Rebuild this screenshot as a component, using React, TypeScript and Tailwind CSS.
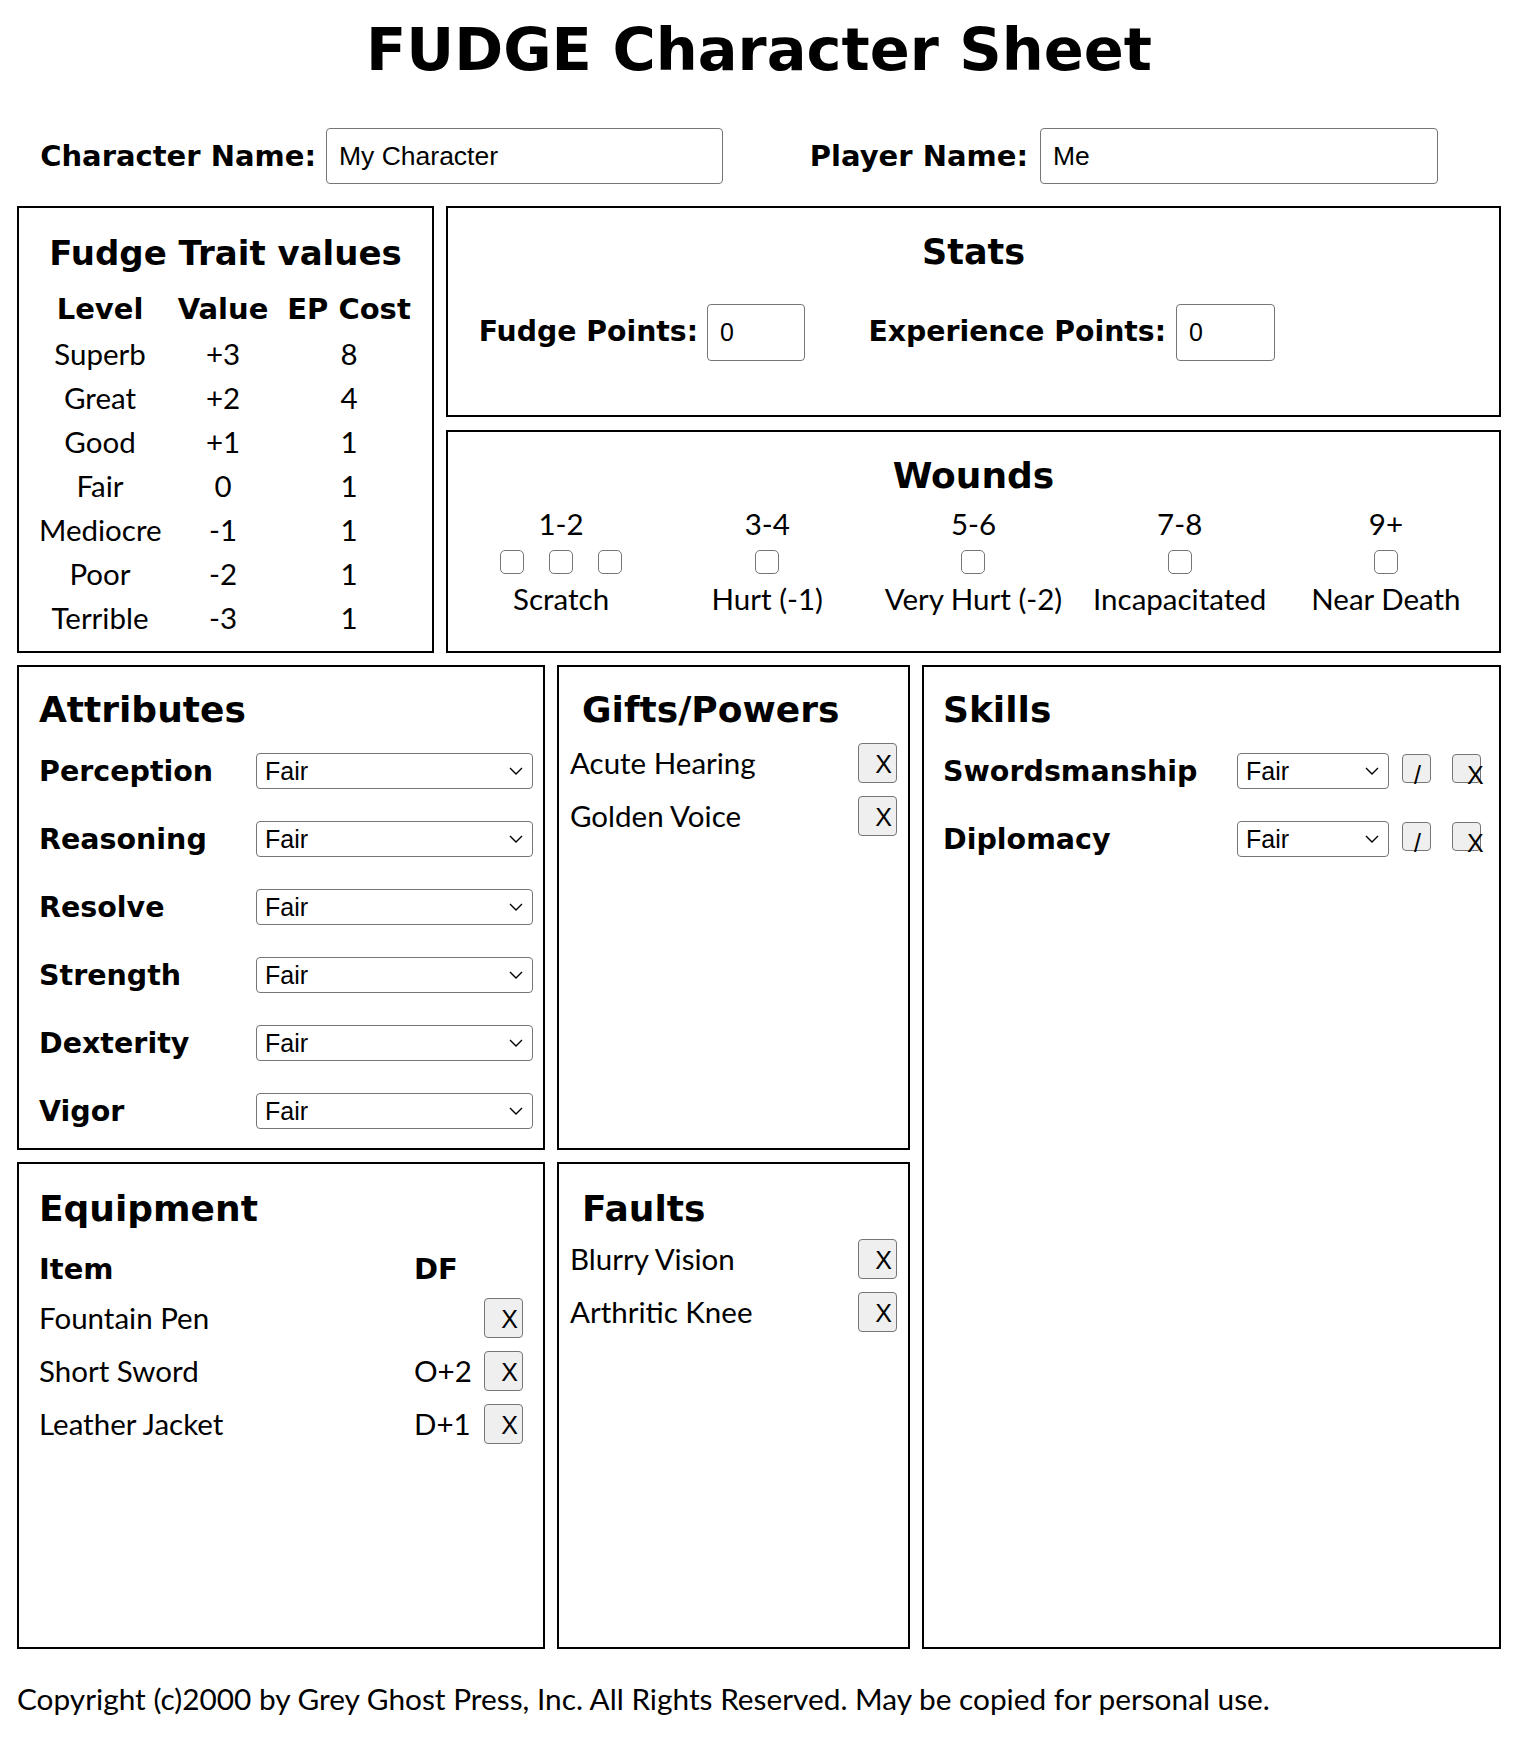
import React from "react";

const sans = "font-['Lato','Open_Sans',sans-serif]";
const bold = "font-['DejaVu_Sans','Open_Sans',sans-serif] font-bold";
const helv = "font-['Liberation_Sans',Arial,Helvetica,sans-serif]";

function Chevron() {
  return (
    <svg
      width="14"
      height="9"
      viewBox="0 0 14 9"
      className="pointer-events-none absolute right-[10px] top-1/2 -translate-y-1/2"
    >
      <path d="M1 1.5 L7 7.5 L13 1.5" fill="none" stroke="#000" strokeWidth="1.4" />
    </svg>
  );
}

function FairSelect({ cls }: { cls: string }) {
  return (
    <div className={`relative h-[36px] ${cls}`}>
      <select
        defaultValue="Fair"
        className={`${helv} appearance-none w-full h-full border border-[#767676] rounded-[4px] bg-white pl-[8px] text-[25px] leading-none text-black outline-none`}
      >
        <option>Superb</option>
        <option>Great</option>
        <option>Good</option>
        <option>Fair</option>
        <option>Mediocre</option>
        <option>Poor</option>
        <option>Terrible</option>
      </select>
      <Chevron />
    </div>
  );
}

function XBtn() {
  return (
    <button
      className={`${helv} w-[39px] h-[40px] shrink-0 border border-[#767676] rounded-[4px] bg-[#efefef] text-[25px] leading-none text-right pr-[4px] pt-[2px] text-black`}
    >
      X
    </button>
  );
}

function TinyBtn({ glyph, left }: { glyph: string; left: string }) {
  return (
    <button className="relative w-[29px] h-[29px] shrink-0 border border-[#767676] rounded-[4px] bg-[#efefef]">
      <span className={`${helv} absolute top-[8px] ${left} text-[25px] leading-none text-black`}>{glyph}</span>
    </button>
  );
}

function WoundCol({ range, label, boxes }: { range: string; label: string; boxes: number }) {
  return (
    <div className="flex flex-col items-center">
      <div className="mt-[14px] text-[29.5px] leading-[32px]">{range}</div>
      <div className="mt-[10px] flex gap-[25px]">
        {Array.from({ length: boxes }).map((_, i) => (
          <input
            key={i}
            type="checkbox"
            className="appearance-none w-[24px] h-[24px] border border-[#767676] rounded-[5px] bg-white"
          />
        ))}
      </div>
      <div className="mt-[9px] text-[29.5px] leading-[32px] whitespace-nowrap">{label}</div>
    </div>
  );
}

const traits: [string, string, string][] = [
  ["Superb", "+3", "8"],
  ["Great", "+2", "4"],
  ["Good", "+1", "1"],
  ["Fair", "0", "1"],
  ["Mediocre", "-1", "1"],
  ["Poor", "-2", "1"],
  ["Terrible", "-3", "1"],
];

const attrs = ["Perception", "Reasoning", "Resolve", "Strength", "Dexterity", "Vigor"];

export default function App() {
  return (
    <div className={`${sans} bg-white text-black w-[1518px] min-h-[1750px] px-[17px]`}>
      <h1 className={`${bold} pt-[20px] text-center text-[59px] leading-none`}>FUDGE Character Sheet</h1>

      {/* Name row */}
      <div className="mt-[49px] flex items-center h-[56px]">
        <div className={`${bold} w-[309px] text-right pr-[10px] text-[29px] leading-none whitespace-nowrap`}>
          Character Name:
        </div>
        <input
          defaultValue="My Character"
          className={`${helv} w-[397px] h-[56px] border border-[#767676] rounded-[4px] pl-[12px] text-[26.5px] text-black outline-none`}
        />
        <div className={`${bold} w-[317px] text-right pr-[12px] text-[29px] leading-none whitespace-nowrap`}>
          Player Name:
        </div>
        <input
          defaultValue="Me"
          className={`${helv} w-[398px] h-[56px] border border-[#767676] rounded-[4px] pl-[12px] text-[26.5px] text-black outline-none`}
        />
      </div>

      {/* Row 1 */}
      <div className="mt-[22px] grid grid-cols-[417px_1055px] gap-x-[12px]">
        <div className="h-[447px] border-2 border-black px-[20px] pt-[28px]">
          <h2 className={`${bold} text-center text-[34px] leading-none whitespace-nowrap`}>Fudge Trait values</h2>
          <div className="mt-[16px] grid grid-cols-[122px_124px_128px] text-center">
            <div className={`${bold} text-[29px] leading-[46px]`}>Level</div>
            <div className={`${bold} text-[29px] leading-[46px]`}>Value</div>
            <div className={`${bold} text-[29px] leading-[46px] whitespace-nowrap`}>EP Cost</div>
            {traits.map(([l, v, c]) => (
              <React.Fragment key={l}>
                <div className="text-[29.5px] leading-[44px]">{l}</div>
                <div className="text-[29.5px] leading-[44px]">{v}</div>
                <div className="text-[29.5px] leading-[44px]">{c}</div>
              </React.Fragment>
            ))}
          </div>
        </div>

        <div className="flex flex-col gap-[13px]">
          <div className="h-[211px] border-2 border-black pt-[27px]">
            <h2 className={`${bold} text-center text-[35px] leading-none`}>Stats</h2>
            <div className="mt-[34px] flex items-center">
              <div className={`${bold} w-[259px] text-right pr-[9px] text-[28.3px] leading-none whitespace-nowrap`}>
                Fudge Points:
              </div>
              <input
                defaultValue="0"
                className={`${helv} w-[98px] h-[57px] border border-[#767676] rounded-[4px] pl-[12px] text-[25px] text-black outline-none`}
              />
              <div className={`${bold} w-[371px] text-right pr-[10px] text-[28.3px] leading-none whitespace-nowrap`}>
                Experience Points:
              </div>
              <input
                defaultValue="0"
                className={`${helv} w-[99px] h-[57px] border border-[#767676] rounded-[4px] pl-[12px] text-[25px] text-black outline-none`}
              />
            </div>
          </div>

          <div className="h-[223px] border-2 border-black pt-[26px] px-[10px]">
            <h2 className={`${bold} text-center text-[36px] leading-none`}>Wounds</h2>
            <div className="grid grid-cols-5">
              <WoundCol range="1-2" label="Scratch" boxes={3} />
              <WoundCol range="3-4" label="Hurt (-1)" boxes={1} />
              <WoundCol range="5-6" label="Very Hurt (-2)" boxes={1} />
              <WoundCol range="7-8" label="Incapacitated" boxes={1} />
              <WoundCol range="9+" label="Near Death" boxes={1} />
            </div>
          </div>
        </div>
      </div>

      {/* Row 2 */}
      <div className="mt-[12px] grid grid-cols-[528px_353px_579px] grid-rows-[485px_487px] gap-x-[12px] gap-y-[12px]">
        {/* Attributes */}
        <div className="border-2 border-black pl-[20px] pt-[25px]">
          <h2 className={`${bold} text-[36px] leading-none`}>Attributes</h2>
          <div className="mt-[25px] flex flex-col gap-[32px]">
            {attrs.map((a) => (
              <div key={a} className="flex items-center h-[36px]">
                <div className={`${bold} w-[217px] pt-[3px] text-[28.5px] leading-none`}>{a}</div>
                <FairSelect cls="w-[277px]" />
              </div>
            ))}
          </div>
        </div>

        {/* Gifts */}
        <div className="border-2 border-black pt-[25px] px-[11px]">
          <h2 className={`${bold} pl-[12px] text-[36px] leading-none`}>Gifts/Powers</h2>
          <div className="mt-[15px] flex flex-col gap-[13px]">
            {["Acute Hearing", "Golden Voice"].map((g) => (
              <div key={g} className="flex items-center justify-between h-[40px]">
                <span className="text-[29.5px] leading-none">{g}</span>
                <XBtn />
              </div>
            ))}
          </div>
        </div>

        {/* Skills */}
        <div className="row-span-2 border-2 border-black pt-[25px] pl-[19px]">
          <h2 className={`${bold} text-[36px] leading-none`}>Skills</h2>
          <div className="mt-[25px] flex flex-col gap-[32px]">
            {["Swordsmanship", "Diplomacy"].map((s) => (
              <div key={s} className="flex items-center h-[36px]">
                <div className={`${bold} w-[294px] pt-[3px] text-[28.5px] leading-none`}>{s}</div>
                <FairSelect cls="w-[152px]" />
                <div className="ml-[13px]">
                  <TinyBtn glyph="/" left="left-[11px]" />
                </div>
                <div className="ml-[21px]">
                  <TinyBtn glyph="X" left="left-[14px]" />
                </div>
              </div>
            ))}
          </div>
        </div>

        {/* Equipment */}
        <div className="border-2 border-black pl-[20px] pt-[27px]">
          <h2 className={`${bold} text-[36px] leading-none`}>Equipment</h2>
          <div className="mt-[26px] grid grid-cols-[375px_70px_40px] items-center">
            <div className={`${bold} text-[29px] leading-[32px]`}>Item</div>
            <div className={`${bold} text-[29px] leading-[32px]`}>DF</div>
            <div />
          </div>
          <div className="mt-[13px] flex flex-col gap-[13px]">
            {[
              ["Fountain Pen", ""],
              ["Short Sword", "O+2"],
              ["Leather Jacket", "D+1"],
            ].map(([n, d]) => (
              <div key={n} className="grid grid-cols-[375px_70px_40px] items-center h-[40px] text-[29.5px] leading-none">
                <span>{n}</span>
                <span>{d}</span>
                <XBtn />
              </div>
            ))}
          </div>
        </div>

        {/* Faults */}
        <div className="border-2 border-black pt-[27px] px-[11px]">
          <h2 className={`${bold} pl-[12px] text-[36px] leading-none`}>Faults</h2>
          <div className="mt-[12px] flex flex-col gap-[13px]">
            {["Blurry Vision", "Arthritic Knee"].map((g) => (
              <div key={g} className="flex items-center justify-between h-[40px]">
                <span className="text-[29.5px] leading-none">{g}</span>
                <XBtn />
              </div>
            ))}
          </div>
        </div>
      </div>

      <p className="mt-[35px] text-[29.8px] leading-none whitespace-nowrap">
        Copyright (c)2000 by Grey Ghost Press, Inc. All Rights Reserved. May be copied for personal use.
      </p>
    </div>
  );
}
